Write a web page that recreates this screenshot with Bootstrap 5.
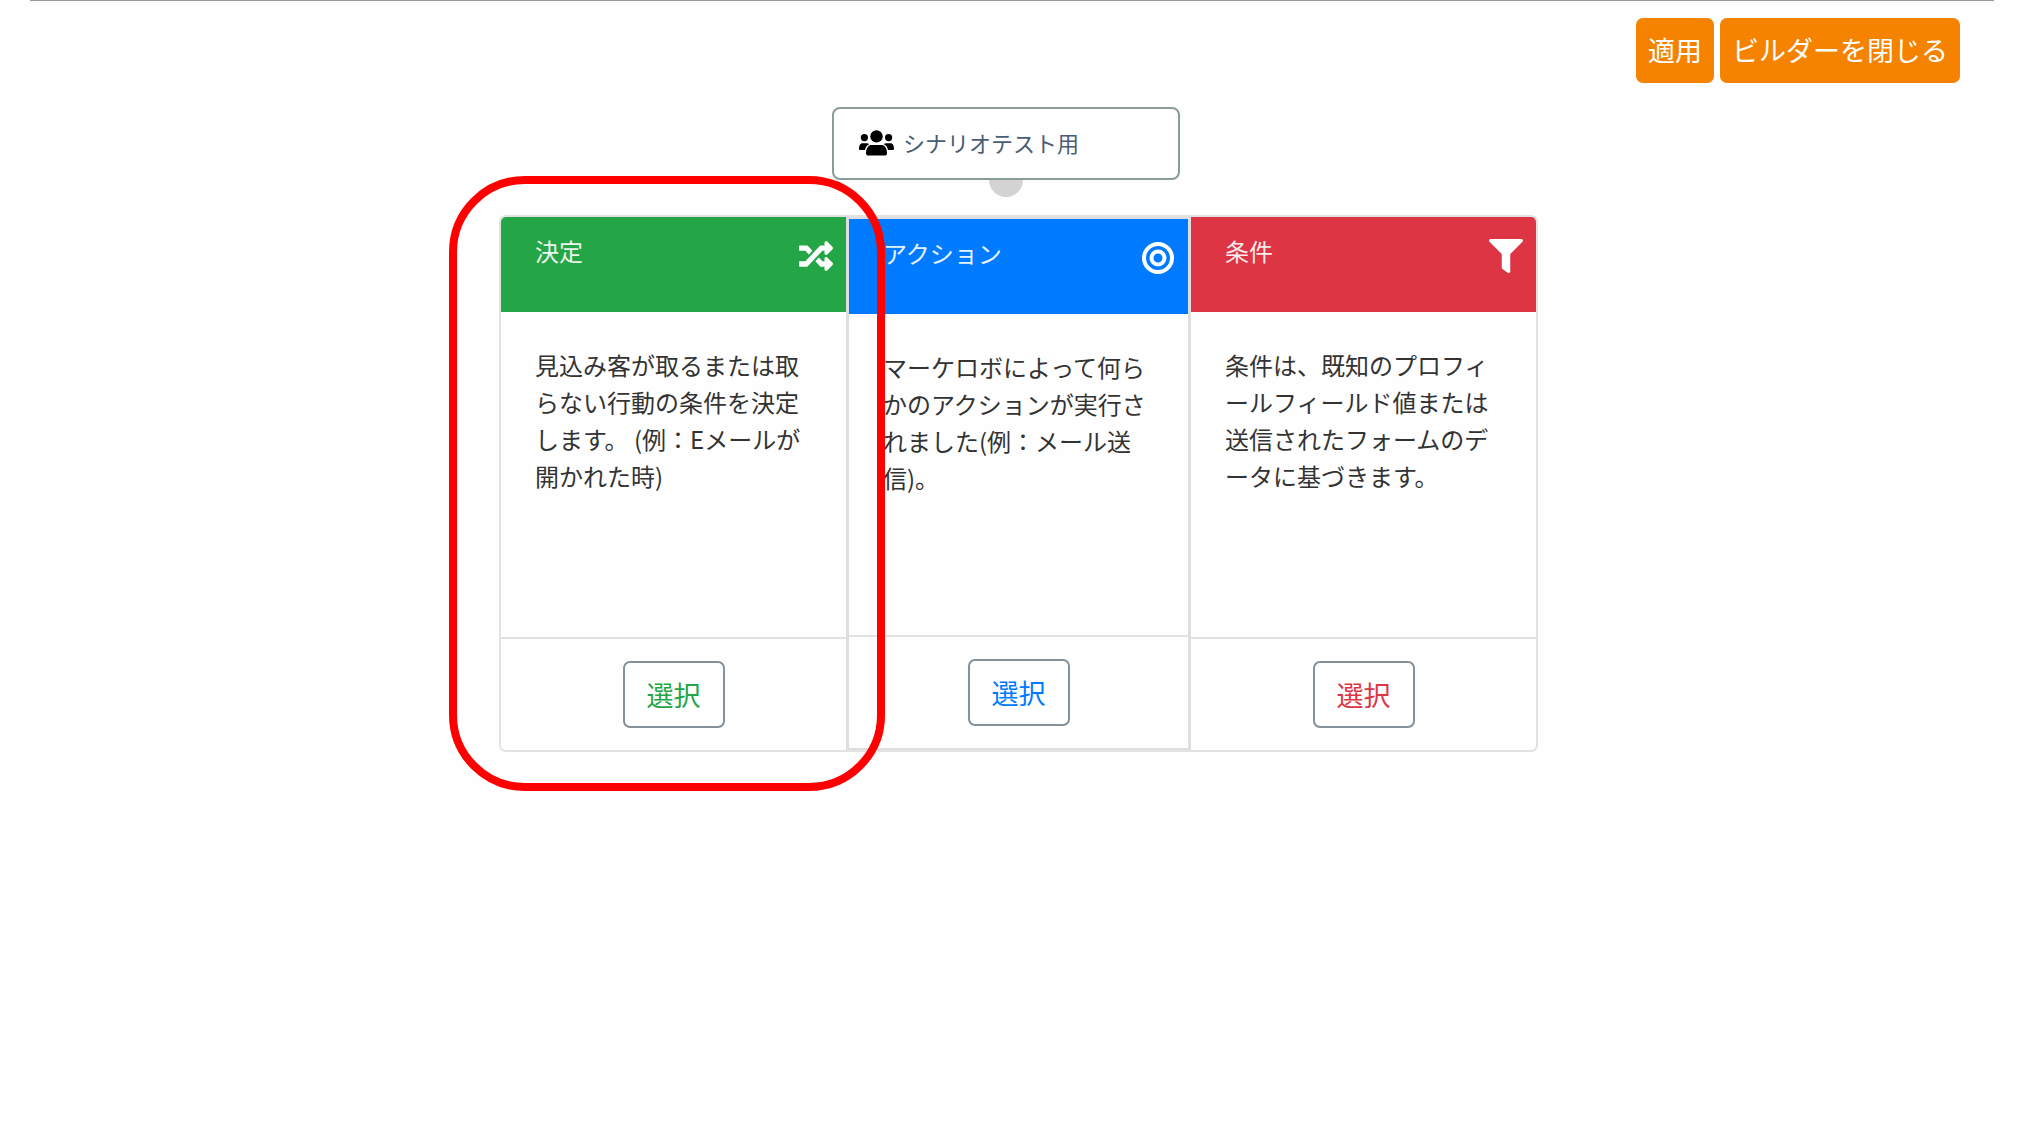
<!DOCTYPE html>
<html lang="ja">
<head>
<meta charset="utf-8">
<meta name="viewport" content="width=device-width, initial-scale=1">
<title>シナリオビルダー</title>
<link href="https://cdn.jsdelivr.net/npm/bootstrap@5.3.0/dist/css/bootstrap.min.css" rel="stylesheet">
<style>
body{font-family:"Noto Sans CJK JP",sans-serif;background:#fefefe;color:#333;font-size:24px;line-height:37px}
.builder{margin:0 30px;border-top:1px solid #999}
.toolbar{padding:17px 34px 0 0;gap:6px}
.btn{font-size:27px;line-height:41px;border-radius:7px}
.btn-builder{--bs-btn-color:#fff;--bs-btn-bg:#f58300;--bs-btn-hover-color:#fff;--bs-btn-hover-bg:#dc7500;border:0;padding:11px 12px 13px}
.source-node{width:348px;height:73px;margin:24px 12px 0 0;padding:0 25px 2px;gap:9px;border:2px solid #8b9c93;border-radius:8px;background:#fff;color:#4b5d73;font-size:22px}
.anchor-dot{width:34px;height:17px;margin-right:12px;border-radius:0 0 17px 17px;background:#d3d3d3}
.chooser{width:1039px;max-width:100%;margin:18px 0 0 13px}
.event-cards{border:2px solid #e2e2e2;border-radius:7px}
.event-cards>.card{border:0;border-radius:5px;background:#fefefe;color:#333}
.event-cards>.card.is-middle{flex:0 0 345px;border:solid #dedede;border-width:2px 3px;border-radius:0}
.event-cards .card-header{height:95px;padding:15px 13px 0 34px;border:0;color:#fff;background:var(--tone)}
.event-cards .card-header h2{font-size:24px;line-height:38px;font-weight:400;opacity:.9}
.event-cards .card-header svg{width:34px;height:34px;margin-top:7px}
.event-cards .card-body{min-height:325px;padding:34px}
.event-cards .is-middle .card-body{min-height:321px}
.event-cards .card-footer{padding:22px 0;border-top:2px solid #e2e2e2;background:none}
.tone-decision{--tone:#25a646}
.tone-action{--tone:#007bff}
.tone-condition{--tone:#de3545}
.btn-choose{--bs-btn-color:var(--tone);--bs-btn-border-color:#84909a;--bs-btn-border-width:2px;--bs-btn-hover-color:#fff;--bs-btn-hover-bg:var(--tone);background:#fff;padding:11px 22px}
.btn-choose:hover{background:var(--tone)}
.highlight{position:absolute;inset:-39px auto -39px -50px;width:436px;border:8px solid #f00;border-radius:76px;pointer-events:none;z-index:2}
</style>
</head>
<body>
<div class="builder min-vh-100">
  <div class="toolbar d-flex justify-content-end">
    <button type="button" class="btn btn-builder">適用</button>
    <button type="button" class="btn btn-builder">ビルダーを閉じる</button>
  </div>
  <main class="d-flex flex-column align-items-center">
    <div class="source-node d-flex align-items-center">
      <svg width="35" height="26" viewBox="0 0 35 26" aria-hidden="true">
        <circle cx="17.5" cy="6.4" r="6.2"/><circle cx="5.4" cy="7.6" r="3.6"/><circle cx="29.6" cy="7.6" r="3.6"/>
        <path d="M11.5 15h12c3 1 4.500 4 4.500 8 0 1.800-.9 2.600-2.600 2.600H9.600C7.900 25.600 7 24.800 7 23c0-4 1.500-7 4.500-8z"/>
        <path d="M3.500 13.200h4.300c1 0 1.800.4 2.400 1C7.700 15.300 6.500 17.500 6 20H1.300C.5 20 0 19.500 0 18.700c0-3 1-5.500 3.500-5.500zM31.500 13.200h-4.300c-1 0-1.800.4-2.400 1 2.500 1.100 3.700 3.300 4.200 5.800h4.700c.8 0 1.300-.5 1.300-1.300 0-3-1-5.500-3.500-5.500z"/>
      </svg>
      <span>シナリオテスト用</span>
    </div>
    <div class="anchor-dot"></div>
    <div class="chooser position-relative">
      <div class="card-group event-cards">
        <section class="card tone-decision">
          <div class="card-header d-flex justify-content-between align-items-start">
            <h2 class="mb-0">決定</h2>
            <svg viewBox="0 0 512 512" fill="#fff" aria-hidden="true"><path d="M504.971 359.029c9.373 9.373 9.373 24.569 0 33.941l-80 79.984c-15.010 15.010-40.971 4.490-40.971-16.971V416h-58.785a12.004 12.004 0 0 1-8.773-3.812l-70.556-75.596 53.333-57.143L352 336h32v-39.981c0-21.438 25.943-31.998 40.971-16.971l80 79.981zM12 176h84l52.781 56.551 53.333-57.143-70.556-75.596A11.999 11.999 0 0 0 122.785 96H12c-6.627 0-12 5.373-12 12v56c0 6.627 5.373 12 12 12zm372 0v39.984c0 21.460 25.961 31.980 40.971 16.971l80-79.984c9.373-9.373 9.373-24.569 0-33.941l-80-79.981C409.943 24.021 384 34.582 384 56.019V96h-58.785a12.004 12.004 0 0 0-8.773 3.812L96 336H12c-6.627 0-12 5.373-12 12v56c0 6.627 5.373 12 12 12h110.785c3.326 0 6.503-1.381 8.773-3.812L352 176h32z"/></svg>
          </div>
          <div class="card-body"><p class="mb-0">見込み客が取るまたは取らない行動の条件を決定します。 (例：Eメールが開かれた時)</p></div>
          <div class="card-footer text-center"><button type="button" class="btn btn-choose">選択</button></div>
        </section>
        <section class="card is-middle tone-action">
          <div class="card-header d-flex justify-content-between align-items-start">
            <h2 class="mb-0">アクション</h2>
            <svg viewBox="0 0 34 34" fill="none" stroke="#fff" stroke-width="4" aria-hidden="true"><circle cx="17" cy="17" r="14"/><circle cx="17" cy="17" r="6.500"/></svg>
          </div>
          <div class="card-body"><p class="mb-0">マーケロボによって何らかのアクションが実行されました(例：メール送信)。</p></div>
          <div class="card-footer text-center"><button type="button" class="btn btn-choose">選択</button></div>
        </section>
        <section class="card tone-condition">
          <div class="card-header d-flex justify-content-between align-items-start">
            <h2 class="mb-0">条件</h2>
            <svg viewBox="0 0 512 512" fill="#fff" aria-hidden="true"><path d="M487.976 0H24.028C2.710 0-8.047 25.866 7.058 40.971L192 225.941V432c0 7.831 3.821 15.170 10.237 19.662l80 55.980C298.020 518.690 320 507.493 320 487.980V225.941l184.947-184.970C520.021 25.896 509.338 0 487.976 0z"/></svg>
          </div>
          <div class="card-body"><p class="mb-0">条件は、既知のプロフィールフィールド値または送信されたフォームのデータに基づきます。</p></div>
          <div class="card-footer text-center"><button type="button" class="btn btn-choose">選択</button></div>
        </section>
      </div>
      <div class="highlight"></div>
    </div>
  </main>
</div>
<script src="https://cdn.jsdelivr.net/npm/bootstrap@5.3.0/dist/js/bootstrap.bundle.min.js"></script>
</body>
</html>
